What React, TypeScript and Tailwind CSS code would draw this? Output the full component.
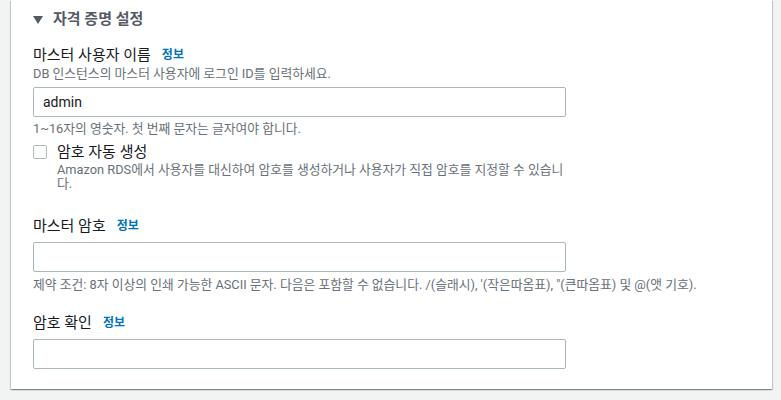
import React from "react";

const font = { fontFamily: 'Roboto, "Noto Sans CJK KR", sans-serif' };

const InfoLink = () => (
  <a className="ml-[11px] text-[12px] font-bold text-[#0073bb]">정보</a>
);

const TextInput = ({ value = "" }: { value?: string }) => (
  <input
    readOnly
    value={value}
    className="block h-[30px] w-[533px] rounded-[2px] border border-[#aab7b8] bg-white px-[9px] text-[14px] text-[#16191f] outline-none"
  />
);

export default function App() {
  return (
    <div className="min-h-[400px] bg-[#f2f3f3]" style={font}>
      <div className="ml-[11px] w-[761px] bg-white px-[22px] pt-[9px] pb-[20px] shadow-[0_1px_1px_0_rgba(0,28,36,0.3),1px_1px_1px_0_rgba(0,28,36,0.15),-1px_1px_1px_0_rgba(0,28,36,0.15)]">
        {/* section header */}
        <div className="flex h-[20px] items-center gap-[10px] text-[15px] font-bold text-[#545b64]">
          <svg width="10" height="8" viewBox="0 0 10 8" className="mt-[1px]">
            <path d="M0 0 L10 0 L5 8 Z" fill="#545b64" />
          </svg>
          <span>자격 증명 설정</span>
        </div>

        {/* master username */}
        <div className="mt-[16px] flex h-[20px] items-center text-[15px] text-[#16191f]">
          마스터 사용자 이름
          <InfoLink />
        </div>
        <p className="mt-[1px] h-[16px] text-[12.8px] leading-[16px] text-[#687078]">
          DB 인스턴스의 마스터 사용자에 로그인 ID를 입력하세요.
        </p>
        <div className="mt-[5px]">
          <TextInput value="admin" />
        </div>
        <p className="mt-[4px] h-[16px] text-[12.8px] leading-[16px] text-[#687078]">
          1~16자의 영숫자. 첫 번째 문자는 글자여야 합니다.
        </p>

        {/* auto generate */}
        <div className="mt-[5px] flex w-[536px] gap-[10px]">
          <div className="mt-[3px] h-[14px] w-[14px] shrink-0 rounded-[2px] border border-[#aab7b8] bg-white" />
          <div>
            <div className="h-[20px] text-[15px] leading-[20px] text-[#16191f]">
              암호 자동 생성
            </div>
            <p className="mt-[1px] text-[12.8px] leading-[14px] text-[#687078]">
              Amazon RDS에서 사용자를 대신하여 암호를 생성하거나 사용자가 직접 암호를 지정할 수 있습니다.
            </p>
          </div>
        </div>

        {/* master password */}
        <div className="mt-[25px] flex h-[20px] items-center text-[15px] text-[#16191f]">
          마스터 암호
          <InfoLink />
        </div>
        <div className="mt-[6px]">
          <TextInput />
        </div>
        <p className="mt-[5px] h-[16px] text-[12.8px] leading-[16px] text-[#687078]">
          제약 조건: 8자 이상의 인쇄 가능한 ASCII 문자. 다음은 포함할 수 없습니다. /(슬래시), '(작은따옴표), "(큰따옴표) 및 @(앳 기호).
        </p>

        {/* confirm */}
        <div className="mt-[20px] flex h-[20px] items-center text-[15px] text-[#16191f]">
          암호 확인
          <InfoLink />
        </div>
        <div className="mt-[6px]">
          <TextInput />
        </div>
      </div>
    </div>
  );
}
